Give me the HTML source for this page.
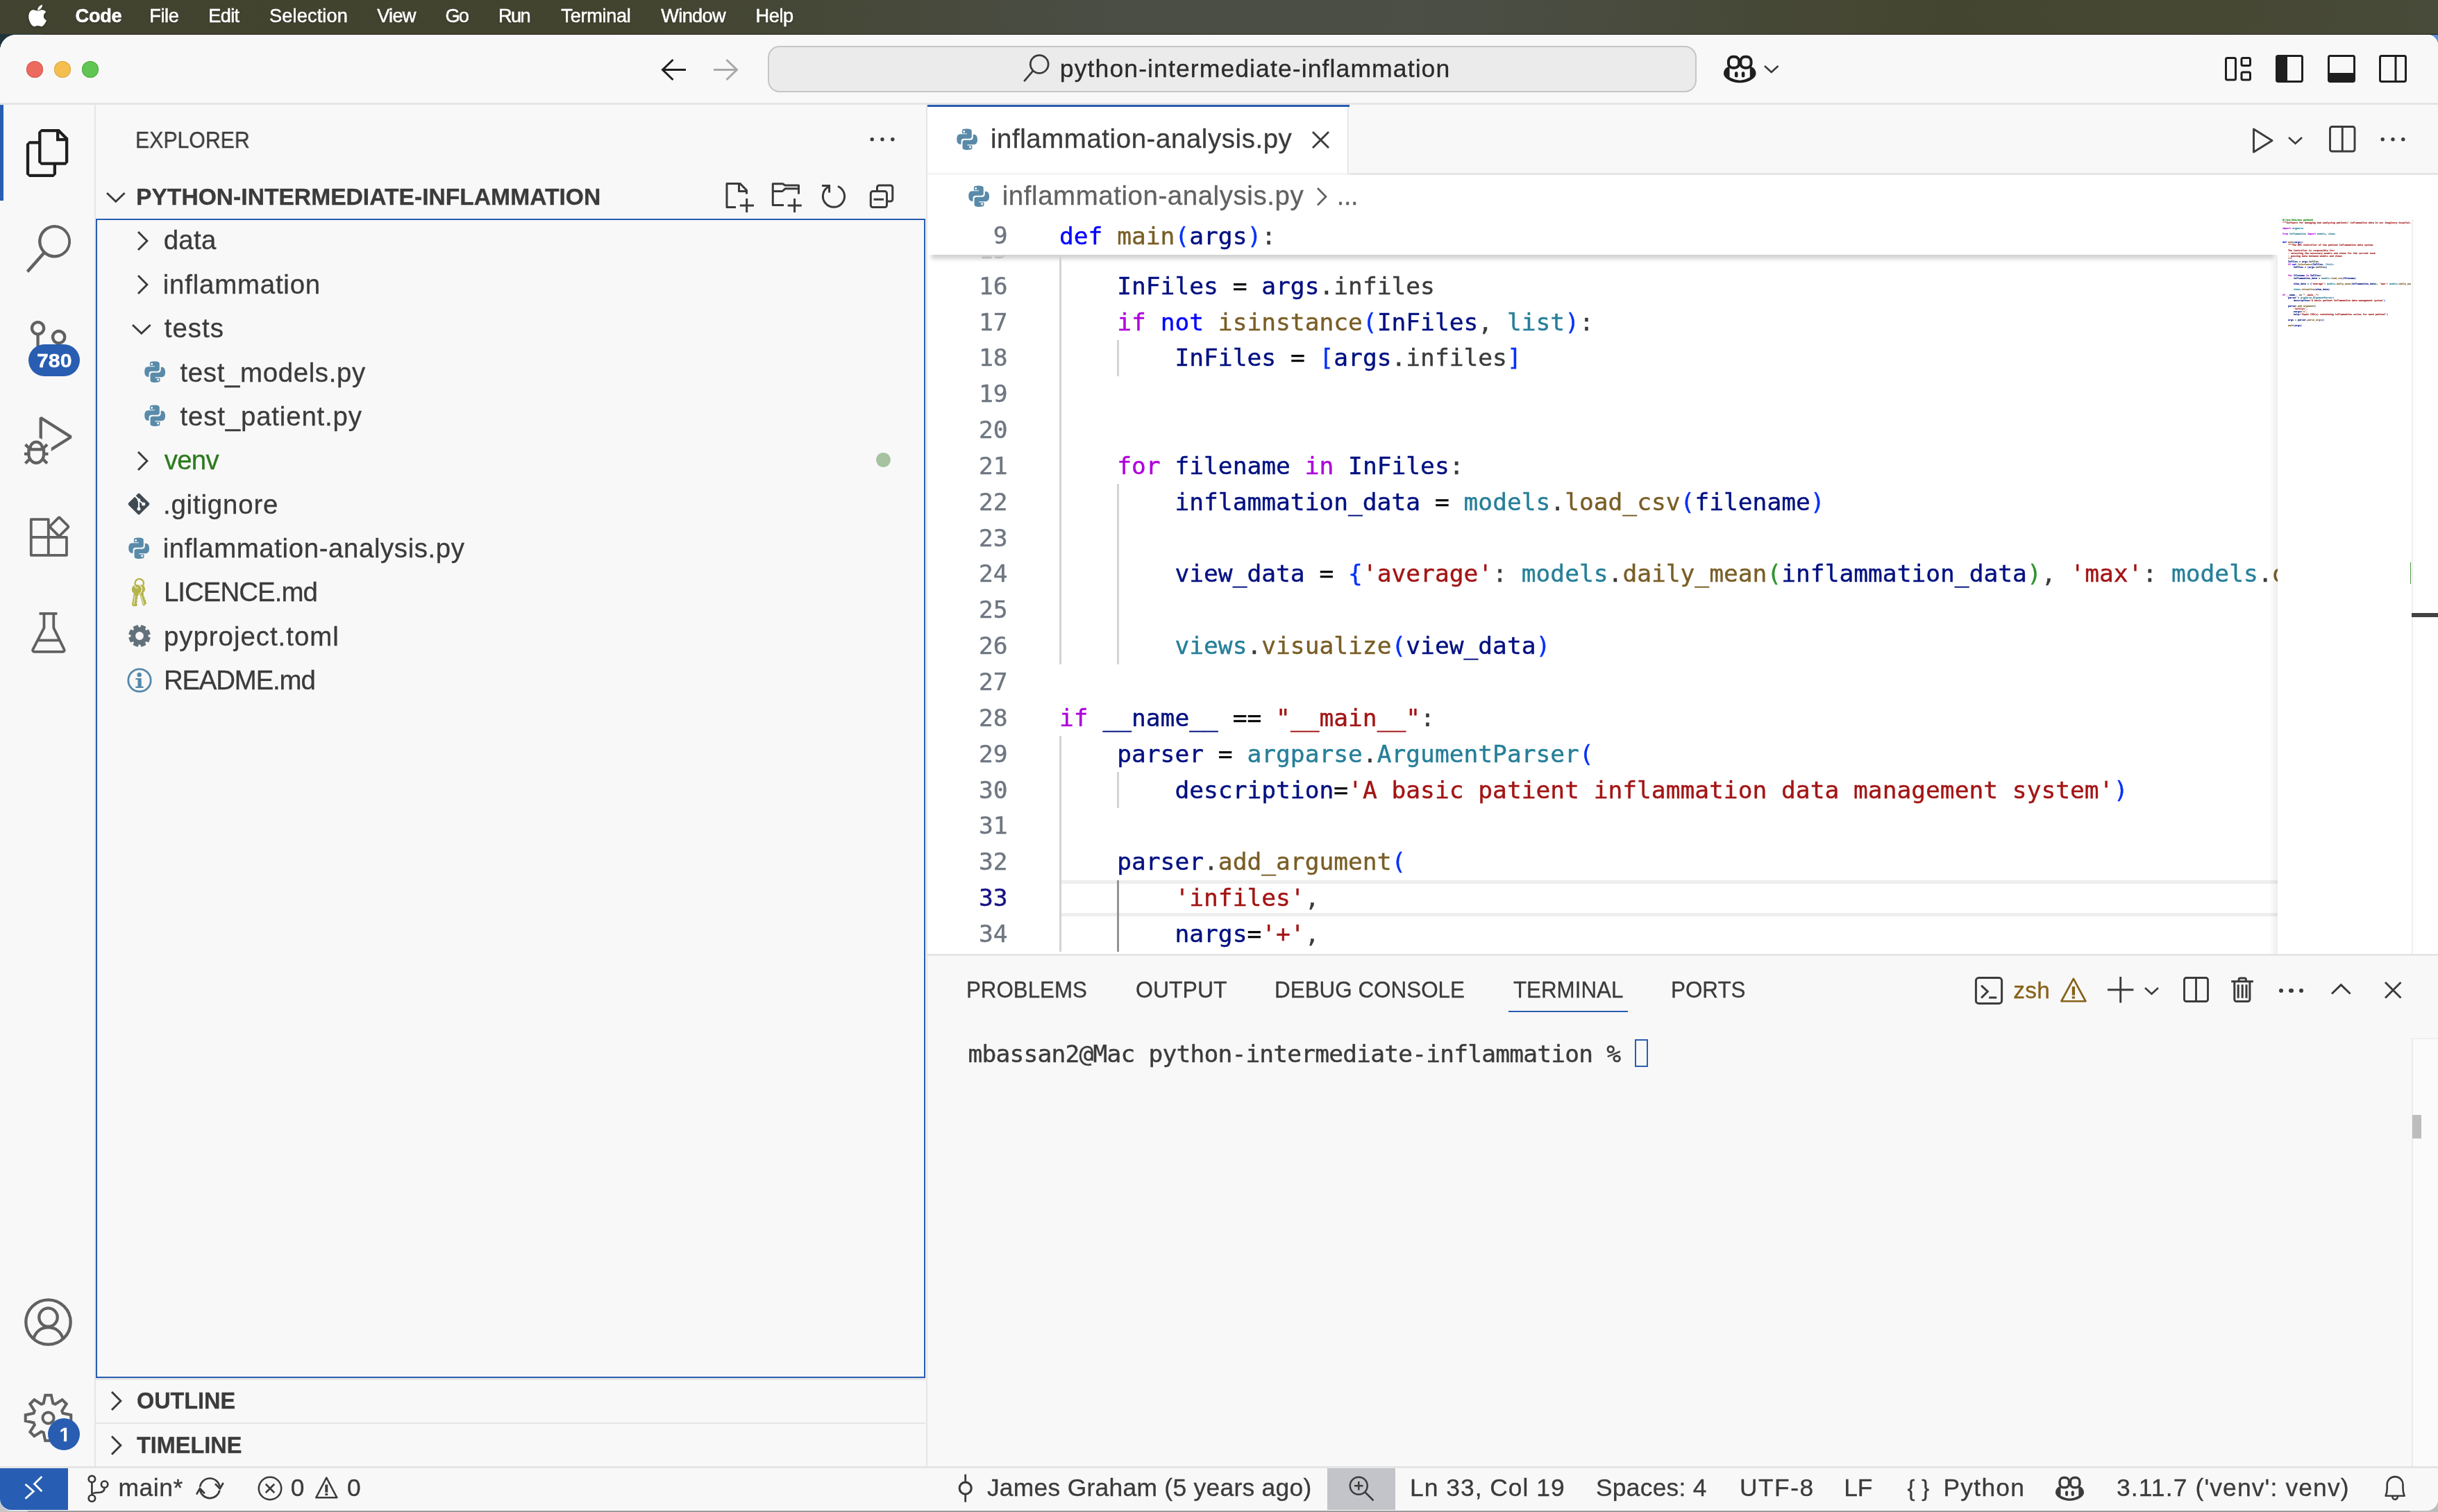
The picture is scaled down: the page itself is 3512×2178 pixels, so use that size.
<!DOCTYPE html>
<html lang="en"><head><meta charset="utf-8"><title>inflammation-analysis.py — python-intermediate-inflammation</title>
<style>
html,body{margin:0;padding:0;}
body{width:3512px;height:2178px;overflow:hidden;background:#2b2f2b;font-family:"Liberation Sans","Helvetica Neue",Arial,sans-serif;}
#root{will-change:transform;position:relative;width:3512px;height:2178px;overflow:hidden;}
#root div,#root svg,#root span.t{position:absolute;}
span.t{line-height:1;white-space:pre;}
svg{overflow:visible;}
.code span{white-space:pre;}
.m{font-family:"DejaVu Sans Mono","Liberation Mono",monospace;}
span.t{-webkit-text-stroke:0.32px currentColor;}
span.t.m{-webkit-text-stroke:0.42px currentColor;}

</style></head>
<body>
<div id="root">
<div style="left:0px;top:0px;width:3512px;height:48.5px;background:linear-gradient(90deg,#424330 0%,#43442f 25%,#4a4d43 45%,#4b4f46 58%,#44452f 80%,#484b39 100%);"></div>
<div style="left:0px;top:48.5px;width:3512px;height:6px;background:#1f1a14;"></div>
<div style="left:0px;top:48.5px;width:60px;height:40px;background:#20333c;"></div>
<div style="left:3492px;top:50px;width:20px;height:40px;background:#5a8fd8;"></div>
<div style="left:0px;top:2140px;width:3512px;height:38px;background:#9b9b9b;"></div>
<div style="left:0px;top:2150px;width:40px;height:28px;background:#c6c6c6;"></div>
<div style="left:3472px;top:2150px;width:40px;height:28px;background:#bdbdbd;"></div>
<span class="t" style="left:108.57px;top:8.58px;font-size:27.2px;color:#fff;font-weight:700;letter-spacing:-0.267px;text-shadow:0 1px 3px rgba(0,0,0,.35);-webkit-text-stroke:0.55px #fff;">Code</span>
<span class="t" style="left:215.37px;top:8.58px;font-size:27.2px;color:#fff;letter-spacing:-0.467px;text-shadow:0 1px 3px rgba(0,0,0,.35);-webkit-text-stroke:0.55px #fff;">File</span>
<span class="t" style="left:300.37px;top:8.58px;font-size:27.2px;color:#fff;letter-spacing:-0.700px;text-shadow:0 1px 3px rgba(0,0,0,.35);-webkit-text-stroke:0.55px #fff;">Edit</span>
<span class="t" style="left:387.97px;top:8.58px;font-size:27.2px;color:#fff;letter-spacing:0.139px;text-shadow:0 1px 3px rgba(0,0,0,.35);-webkit-text-stroke:0.55px #fff;">Selection</span>
<span class="t" style="left:543.17px;top:8.58px;font-size:27.2px;color:#fff;letter-spacing:-0.700px;text-shadow:0 1px 3px rgba(0,0,0,.35);-webkit-text-stroke:0.55px #fff;">View</span>
<span class="t" style="left:641.57px;top:8.58px;font-size:27.2px;color:#fff;letter-spacing:-1.900px;text-shadow:0 1px 3px rgba(0,0,0,.35);-webkit-text-stroke:0.55px #fff;">Go</span>
<span class="t" style="left:717.97px;top:8.58px;font-size:27.2px;color:#fff;letter-spacing:-1.550px;text-shadow:0 1px 3px rgba(0,0,0,.35);-webkit-text-stroke:0.55px #fff;">Run</span>
<span class="t" style="left:808.37px;top:8.58px;font-size:27.2px;color:#fff;letter-spacing:-0.314px;text-shadow:0 1px 3px rgba(0,0,0,.35);-webkit-text-stroke:0.55px #fff;">Terminal</span>
<span class="t" style="left:952.37px;top:8.58px;font-size:27.2px;color:#fff;letter-spacing:-0.700px;text-shadow:0 1px 3px rgba(0,0,0,.35);-webkit-text-stroke:0.55px #fff;">Window</span>
<span class="t" style="left:1088.57px;top:8.58px;font-size:27.2px;color:#fff;letter-spacing:-0.433px;text-shadow:0 1px 3px rgba(0,0,0,.35);-webkit-text-stroke:0.55px #fff;">Help</span>
<svg style="left:30px;top:0px;filter:drop-shadow(0 1px 2px rgba(0,0,0,.3));" width="50" height="48" viewBox="0 0 1575 1512"><path d="M770 490C700 500 640 445 560 450C440 455 355 580 355 760C355 900 440 1080 520 1160C570 1210 620 1215 680 1185C730 1160 810 1160 860 1185C920 1215 975 1210 1020 1160C1090 1090 1140 1000 1165 925C1080 890 1035 820 1035 740C1035 660 1075 590 1145 545C1100 480 1030 445 960 445C880 445 830 490 770 490Z" fill="#fff" /><path d="M760 470C745 380 840 240 975 215C990 330 890 460 760 470Z" fill="#fff" /></svg>
<div style="left:0px;top:50.2px;width:3512px;height:2124.8px;background:#f8f8f8;border-radius:23px 15px 16px 16px;box-shadow:0 1px 0 #fff, inset 0 1.5px 0 #fff;"></div>
<div style="left:0px;top:148.1px;width:3512px;height:2.9px;background:#e5e5e5;"></div>
<div style="left:38px;top:87.8px;width:24px;height:24px;background:#ed6a5e;border-radius:50%;box-shadow:inset 0 0 0 1px #d5594e;"></div>
<div style="left:78px;top:87.8px;width:24px;height:24px;background:#f5bf4f;border-radius:50%;box-shadow:inset 0 0 0 1px #dca53e;"></div>
<div style="left:118px;top:87.8px;width:24px;height:24px;background:#61c554;border-radius:50%;box-shadow:inset 0 0 0 1px #4fa942;"></div>
<div style="left:1106px;top:66px;width:1338px;height:66.5px;background:#ebebeb;border-radius:17px;box-shadow:inset 0 0 0 2px #c6c6c6;"></div>
<span class="t" style="left:1526.86px;top:81.66px;font-size:35.6px;color:#2b2b2b;letter-spacing:1.078px;">python-intermediate-inflammation</span>
<svg style="left:953.00px;top:84.81px;" width="35.00" height="30.98" viewBox="0 0 35 30.975"><path d="M35 15.4875H1.5M16.4875 1L1.5 15.4875L16.4875 29.975" fill="none" stroke="#1f1f1f" stroke-width="3" /></svg>
<svg style="left:1028.00px;top:84.81px;" width="35.00" height="30.98" viewBox="0 0 35 30.975"><path d="M0 15.4875H33.5M18.5125 1L33.5 15.4875L18.5125 29.975" fill="none" stroke="#a8a8a8" stroke-width="3" /></svg>
<svg style="left:1470.00px;top:74.00px;" width="46.00" height="48.00" viewBox="1470.00 74.00 46.00 48.00"><circle cx="1497.200" cy="92.500" r="12.900" fill="none" stroke="#3b3b3b" stroke-width="2.800"/><path d="M1488.200 101.800L1475.200 117.200" fill="none" stroke="#3b3b3b" stroke-width="2.8" /></svg>
<svg style="left:2482.50px;top:78.50px;" width="46.50" height="41.00" viewBox="0 0 47 40"><path d="M0 26.5C0 20 5 16.500 8 16.500L39 16.500C42 16.500 47 20 47 26.500C47 33.500 35 40 23.500 40C12 40 0 33.500 0 26.500z" fill="#1f1f1f" /><path d="M8.600 15L38.200 15L38.200 32C33 34.800 28 36.300 23.500 36.300C19 36.300 14 34.800 8.600 32z" fill="#f8f8f8" /><rect x="7" y="2" width="15.400" height="16.300" rx="6.500" fill="#f8f8f8" stroke="#1f1f1f" stroke-width="4"/><rect x="24.600" y="2" width="15.400" height="16.300" rx="6.500" fill="#f8f8f8" stroke="#1f1f1f" stroke-width="4"/><rect x="16.100" y="23.800" width="4.600" height="8.400" rx="2.300" fill="#1f1f1f"/><rect x="26.100" y="23.800" width="4.600" height="8.400" rx="2.300" fill="#1f1f1f"/></svg>
<svg style="left:2541.45px;top:93.69px;" width="21.50" height="11.61" viewBox="0 0 21.5 11.610000000000001"><path d="M1 1L10.75 10.010000000000002L20.5 1" fill="none" stroke="#3b3b3b" stroke-width="2.6" /></svg>
<svg style="left:3205.00px;top:81.50px;" width="38.50" height="34.50" viewBox="0 0 38.5 34.5"><rect x="1.5" y="1.5" width="14" height="31.5" rx="2" fill="none" stroke="#1f1f1f" stroke-width="3"/><rect x="24" y="1.5" width="12.5" height="11" rx="2" fill="none" stroke="#1f1f1f" stroke-width="3"/><rect x="24" y="22" width="12.5" height="11" rx="2" fill="none" stroke="#1f1f1f" stroke-width="3"/></svg>
<svg style="left:3278.00px;top:79.00px;" width="40.00" height="40.00" viewBox="0 0 40 40"><rect x="1.5" y="1.5" width="37" height="37" rx="2.2" fill="none" stroke="#1f1f1f" stroke-width="3"/><path d="M1.5 3h15.5v34h-15.500z" fill="#1f1f1f"/></svg>
<svg style="left:3352.60px;top:79.00px;" width="40.00" height="40.00" viewBox="0 0 40 40"><rect x="1.5" y="1.5" width="37" height="37" rx="2.2" fill="none" stroke="#1f1f1f" stroke-width="3"/><path d="M3 26h34v11.500h-34z" fill="#1f1f1f"/></svg>
<svg style="left:3427.40px;top:79.00px;" width="40.00" height="40.00" viewBox="0 0 40 40"><rect x="1.5" y="1.500" width="37" height="37" rx="2.2" fill="none" stroke="#1f1f1f" stroke-width="3"/><path d="M24 1.500v37" stroke="#1f1f1f" stroke-width="3"/></svg>
<div style="left:136.0px;top:151.0px;width:2.4px;height:1962.5px;background:#e5e5e5;"></div>
<div style="left:0px;top:151.0px;width:5.2px;height:138.2px;background:#285db1;"></div>
<svg style="left:34.50px;top:185.50px;" width="69.00" height="69.00" viewBox="0 0 24 24"><path d="M17.5 0h-9L7 1.5V6H2.5L1 7.5v15.07L2.5 24h12.07L16 22.57V18h4.7l1.3-1.430V4.500L17.500 0zm0 2.120l2.380 2.380H17.500V2.120zm-3 20.380h-12v-15H7v9.070L8.500 18h6v4.500zm6-6h-12v-15H16V6h4.500v10.500z" fill="#1f1f1f" /></svg>
<svg style="left:34.50px;top:323.74px;" width="69.00" height="69.00" viewBox="0 0 24 24"><path d="M15.25 0a8.25 8.25 0 0 0-6.18 13.72L1 22.880l1.120 1.120 8.050-9.120A8.251 8.251 0 1 0 15.250.010V0zm0 15a6.750 6.750 0 1 1 0-13.500 6.750 6.750 0 0 1 0 13.500z" fill="#616161" /></svg>
<svg style="left:34.50px;top:461.98px;" width="69.00" height="69.00" viewBox="0 0 24 24"><path d="M21.007 8.222A3.738 3.738 0 0 0 15.045 5.2a3.737 3.737 0 0 0 1.156 6.583 2.988 2.988 0 0 1-2.668 1.670h-2.990a4.456 4.456 0 0 0-2.989 1.165V7.400a3.737 3.737 0 1 0-1.494 0v9.117a3.776 3.776 0 1 0 1.816.099 2.990 2.990 0 0 1 2.668-1.667h2.990a4.484 4.484 0 0 0 4.223-3.039 3.736 3.736 0 0 0 3.250-3.687zM4.565 3.738a2.242 2.242 0 1 1 4.484 0 2.242 2.242 0 0 1-4.484 0zm4.484 16.441a2.242 2.242 0 1 1-4.484 0 2.242 2.242 0 0 1 4.484 0zm8.221-9.715a2.242 2.242 0 1 1 0-4.485 2.242 2.242 0 0 1 0 4.485z" fill="#616161" /></svg>
<svg style="left:34.50px;top:600.22px;" width="69.00" height="69.00" viewBox="0 0 24 24"><path d="M10.94 13.5l-1.32 1.32a3.73 3.73 0 0 0-7.24 0L1.06 13.5 0 14.560l1.720 1.720-.220.220V18H0v1.500h1.500v.080c.077.489.214.966.410 1.420L0 22.940 1.060 24l1.650-1.650A4.308 4.308 0 0 0 6 24a4.310 4.310 0 0 0 3.290-1.650L10.940 24 12 22.940 10.090 21c.198-.464.336-.951.410-1.450v-.100H12V18h-1.500v-1.500l-.220-.220L12 14.560l-1.060-1.060zM6 13.500a2.250 2.250 0 0 1 2.250 2.250h-4.500A2.250 2.250 0 0 1 6 13.500zm3 6a3.330 3.330 0 0 1-3 3 3.330 3.330 0 0 1-3-3v-2.250h6v2.250zm14.760-9.900v1.260L13.500 17.370V15.600l8.500-5.370L9 2v9.460a5.070 5.070 0 0 0-1.500-.720V.630L8.640 0l15.120 9.600z" fill="#616161" /></svg>
<svg style="left:34.50px;top:738.46px;" width="69.00" height="69.00" viewBox="0 0 24 24"><path d="M3.400 3.550H12.100V12.450H21.200V21.500H3.400zM3.400 12.450H12.100M12.100 12.450V21.500" fill="none" stroke="#616161" stroke-width="1.32" stroke-linejoin="round"/><rect x="14.06" y="3.80" width="6.800" height="6.800" rx="0.700" transform="rotate(45 17.46 7.2)" fill="none" stroke="#616161" stroke-width="1.32"/></svg>
<svg style="left:34.50px;top:876.70px;" width="69.00" height="69.00" viewBox="0 0 24 24"><path d="M7.500 2.400H16.500M9.900 2.400V9.500L4.300 20.400a.75.75 0 0 0 .7 1.100H19.300a.75.75 0 0 0 .700-1.100L14.700 9.500V2.400M6.700 15.750H17.600" fill="none" stroke="#616161" stroke-width="1.32" stroke-linejoin="round"/></svg>
<div style="left:40.7px;top:495.8px;width:74px;height:45.8px;background:#285db1;border-radius:23px;"></div>
<span class="t" style="left:53.14px;top:506.04px;font-size:27.6px;color:#fff;font-weight:700;transform:scaleX(1.0960);transform-origin:0 0;">780</span>
<svg style="left:34.50px;top:1869.70px;" width="69.00" height="69.00" viewBox="0 0 24 24"><circle cx="12" cy="12" r="11.200" fill="none" stroke="#616161" stroke-width="1.5"/><circle cx="12" cy="9.600" r="4.600" fill="none" stroke="#616161" stroke-width="1.5"/><path d="M4.600 20.200c1.200-3.600 4-5.600 7.400-5.600s6.200 2 7.400 5.600" fill="none" stroke="#616161" stroke-width="1.5" /></svg>
<svg style="left:34.50px;top:2008.00px;" width="69.00" height="69.00" viewBox="0 0 24 24"><path d="M9.62 4.68L10.51 0.60L13.49 0.60L14.38 4.68L15.50 5.14L19.01 2.89L21.11 4.99L18.86 8.50L19.32 9.62L23.40 10.51L23.40 13.49L19.32 14.38L18.86 15.50L21.11 19.01L19.01 21.11L15.50 18.86L14.38 19.32L13.49 23.40L10.51 23.40L9.62 19.32L8.50 18.86L4.99 21.11L2.89 19.01L5.14 15.50L4.68 14.38L0.60 13.49L0.60 10.51L4.68 9.62L5.14 8.50L2.89 4.99L4.99 2.89L8.50 5.14z" fill="none" stroke="#616161" stroke-width="1.4" stroke-linejoin="miter"/><circle cx="12" cy="12" r="2.800" fill="none" stroke="#616161" stroke-width="1.400"/></svg>
<div style="left:69.4px;top:2043px;width:45.8px;height:45.8px;background:#285db1;border-radius:50%;"></div>
<span class="t" style="left:85.75px;top:2053.02px;font-size:27.5px;color:#fff;font-weight:700;clip-path:polygon(0 0,100% 0,100% 72%,68% 72%,68% 100%,40% 100%,40% 72%,0 72%);">1</span>
<div style="left:1334.3px;top:151.0px;width:2.4px;height:1962.5px;background:#e5e5e5;"></div>
<span class="t" style="left:195.04px;top:186.10px;font-size:32.6px;color:#3b3b3b;transform:scaleX(0.9280);transform-origin:0 0;">EXPLORER</span>
<svg style="left:1253.00px;top:197.10px;" width="36.00" height="7.40" viewBox="0 0 36 7.3999999999999995"><circle cx="3.20" cy="3.6999999999999997" r="2.70" fill="#3b3b3b"/><circle cx="18.00" cy="3.6999999999999997" r="2.70" fill="#3b3b3b"/><circle cx="32.80" cy="3.6999999999999997" r="2.70" fill="#3b3b3b"/></svg>
<span class="t" style="left:195.84px;top:267.60px;font-size:32.6px;color:#3b3b3b;font-weight:700;transform:scaleX(1.0320);transform-origin:0 0;">PYTHON-INTERMEDIATE-INFLAMMATION</span>
<svg style="left:153.40px;top:277.05px;" width="27.60" height="14.90" viewBox="0 0 27.6 14.904000000000002"><path d="M1 1L13.8 13.304000000000002L26.6 1" fill="none" stroke="#3b3b3b" stroke-width="2.9" /></svg>
<svg style="left:1040.00px;top:258.00px;" width="50.00" height="52.00" viewBox="1040.00 258.00 50.00 52.00"><path d="M1060 298.500H1047V264.400H1066L1075.500 274V279.600M1064.500 264.400V275.500H1075.500M1075.700 286V306M1065.800 295.900H1086" fill="none" stroke="#3b3b3b" stroke-width="3" stroke-linejoin="round"/></svg>
<svg style="left:1108.00px;top:258.00px;" width="52.00" height="52.00" viewBox="1108.00 258.00 52.00 52.00"><path d="M1129 295.600H1113.300V264.700H1127.600L1131 267.100H1150.500V279.600M1113.300 275.500H1127L1131 271.800H1150.500M1144.600 286V306M1134.700 295.900H1154.800" fill="none" stroke="#3b3b3b" stroke-width="3" stroke-linejoin="round"/></svg>
<svg style="left:1180.00px;top:260.00px;" width="42.00" height="44.00" viewBox="1180.00 260.00 42.00 44.00"><path d="M1207 268.300A15.600 15.600 0 1 1 1193.500 269M1184 267.400H1194.600V277.500" fill="none" stroke="#3b3b3b" stroke-width="3" /></svg>
<svg style="left:1250.00px;top:262.00px;" width="40.00" height="40.00" viewBox="1250.00 262.00 40.00 40.00"><rect x="1254.300" y="275.600" width="23.200" height="22.900" rx="3" fill="none" stroke="#3b3b3b" stroke-width="3"/><path d="M1263.500 275V270a3 3 0 0 1 3-3h16.300a3 3 0 0 1 3 3v17a3 3 0 0 1-3 3H1278M1258.600 287.300H1273" fill="none" stroke="#3b3b3b" stroke-width="3" /></svg>
<div style="left:138.2px;top:315.2px;width:1194.8999999999999px;height:1669.3999999999999px;box-sizing:border-box;border:2.9px solid #285db1;"></div>
<span class="t" style="left:235.70px;top:327.49px;font-size:38.4px;color:#3b3b3b;letter-spacing:0.333px;">data</span>
<span class="t" style="left:234.70px;top:390.85px;font-size:38.4px;color:#3b3b3b;letter-spacing:0.808px;">inflammation</span>
<span class="t" style="left:236.70px;top:454.21px;font-size:38.4px;color:#3b3b3b;letter-spacing:1.025px;">tests</span>
<span class="t" style="left:259.50px;top:517.57px;font-size:38.4px;color:#3b3b3b;letter-spacing:0.654px;">test_models.py</span>
<span class="t" style="left:259.50px;top:580.93px;font-size:38.4px;color:#3b3b3b;letter-spacing:0.843px;">test_patient.py</span>
<span class="t" style="left:236.70px;top:644.29px;font-size:38.4px;color:#2d7a1f;letter-spacing:-0.700px;">venv</span>
<span class="t" style="left:234.90px;top:707.65px;font-size:38.4px;color:#3b3b3b;letter-spacing:0.844px;">.gitignore</span>
<span class="t" style="left:234.70px;top:771.01px;font-size:38.4px;color:#3b3b3b;letter-spacing:0.609px;">inflammation-analysis.py</span>
<span class="t" style="left:235.90px;top:834.37px;font-size:38.4px;color:#3b3b3b;letter-spacing:-0.934px;">LICENCE.md</span>
<span class="t" style="left:235.90px;top:897.73px;font-size:38.4px;color:#3b3b3b;letter-spacing:0.992px;">pyproject.toml</span>
<span class="t" style="left:235.90px;top:961.09px;font-size:38.4px;color:#3b3b3b;letter-spacing:-1.175px;">README.md</span>
<svg style="left:198.45px;top:332.80px;" width="15.50" height="28.00" viewBox="0 0 15.5 28"><path d="M1 1L13.9 14.0L1 27" fill="none" stroke="#3b3b3b" stroke-width="2.9" /></svg>
<svg style="left:198.45px;top:396.16px;" width="15.50" height="28.00" viewBox="0 0 15.5 28"><path d="M1 1L13.9 14.0L1 27" fill="none" stroke="#3b3b3b" stroke-width="2.9" /></svg>
<svg style="left:190.30px;top:466.97px;" width="27.60" height="14.90" viewBox="0 0 27.6 14.904000000000002"><path d="M1 1L13.8 13.304000000000002L26.6 1" fill="none" stroke="#3b3b3b" stroke-width="2.9" /></svg>
<svg style="left:198.45px;top:649.60px;" width="15.50" height="28.00" viewBox="0 0 15.5 28"><path d="M1 1L13.9 14.0L1 27" fill="none" stroke="#3b3b3b" stroke-width="2.9" /></svg>
<svg style="left:200.35px;top:509.69px;" width="50.00" height="50.00" viewBox="0 0 1512 1512"><path d="M480 520V400C480 340 560 320 690 320C820 320 900 350 900 420V650C900 720 860 750 790 750H560C480 750 440 800 440 870V990H400C300 990 250 900 250 770C250 640 300 555 400 555H690V520ZM565 395a45 45 0 1 0 0 90a45 45 0 1 0 0-90z" fill="#598aa9" fill-rule="evenodd"/><g transform="rotate(180 700 780)"><path d="M480 520V400C480 340 560 320 690 320C820 320 900 350 900 420V650C900 720 860 750 790 750H560C480 750 440 800 440 870V990H400C300 990 250 900 250 770C250 640 300 555 400 555H690V520ZM565 395a45 45 0 1 0 0 90a45 45 0 1 0 0-90z" fill="#598aa9" fill-rule="evenodd"/></g></svg>
<svg style="left:200.35px;top:573.05px;" width="50.00" height="50.00" viewBox="0 0 1512 1512"><path d="M480 520V400C480 340 560 320 690 320C820 320 900 350 900 420V650C900 720 860 750 790 750H560C480 750 440 800 440 870V990H400C300 990 250 900 250 770C250 640 300 555 400 555H690V520ZM565 395a45 45 0 1 0 0 90a45 45 0 1 0 0-90z" fill="#598aa9" fill-rule="evenodd"/><g transform="rotate(180 700 780)"><path d="M480 520V400C480 340 560 320 690 320C820 320 900 350 900 420V650C900 720 860 750 790 750H560C480 750 440 800 440 870V990H400C300 990 250 900 250 770C250 640 300 555 400 555H690V520ZM565 395a45 45 0 1 0 0 90a45 45 0 1 0 0-90z" fill="#598aa9" fill-rule="evenodd"/></g></svg>
<svg style="left:177.45px;top:764.03px;" width="50.00" height="50.00" viewBox="0 0 1512 1512"><path d="M480 520V400C480 340 560 320 690 320C820 320 900 350 900 420V650C900 720 860 750 790 750H560C480 750 440 800 440 870V990H400C300 990 250 900 250 770C250 640 300 555 400 555H690V520ZM565 395a45 45 0 1 0 0 90a45 45 0 1 0 0-90z" fill="#598aa9" fill-rule="evenodd"/><g transform="rotate(180 700 780)"><path d="M480 520V400C480 340 560 320 690 320C820 320 900 350 900 420V650C900 720 860 750 790 750H560C480 750 440 800 440 870V990H400C300 990 250 900 250 770C250 640 300 555 400 555H690V520ZM565 395a45 45 0 1 0 0 90a45 45 0 1 0 0-90z" fill="#598aa9" fill-rule="evenodd"/></g></svg>
<svg style="left:182.40px;top:708.00px;" width="36.00" height="36.00" viewBox="182.40 708.00 36.00 36.00"><rect x="188.90" y="714.50" width="23" height="23" rx="2.400" transform="rotate(45 200.4 726)" fill="#3f4a53"/><path d="M194.50 714.00L200.40 720.00V733.00M200.80 721.00L207.00 726" fill="none" stroke="#f8f8f8" stroke-width="2.1" /><circle cx="200.40" cy="733.00" r="2.500" fill="#f8f8f8"/><circle cx="207.10" cy="726.00" r="2.600" fill="#f8f8f8"/><circle cx="200.40" cy="720.30" r="2.200" fill="#f8f8f8"/></svg>
<svg style="left:184.40px;top:831.00px;" width="32.00" height="44.00" viewBox="184.40 831.00 32.00 44.00"><g transform="translate(0.00 0.00)"><circle cx="203.200" cy="848.500" r="6.300" fill="#b5b44c"/><path d="M201.300 855.500L206.300 872L208 872.700L211.900 868.600L210.200 867L210.700 864.600L208.700 863L209 860.600L207.200 859L207.400 855.500L205.500 852z" fill="#b5b44c" /><path d="M203.200 857L207.600 870.500" fill="none" stroke="#f8f8f8" stroke-width="0.9" /><circle cx="197.200" cy="849" r="7.600" fill="#b5b44c" stroke="#f8f8f8" stroke-width="1.100"/><path d="M193.300 854.500L190.300 871L192 873.200L197.300 873.200L198.400 870.300L197 868.400L198.600 866.200L197.300 864.200L199 862L198 860L200 857.200L201.200 853z" fill="#b5b44c" /><path d="M194.800 858L193.200 871" fill="none" stroke="#f8f8f8" stroke-width="0.9" /><path d="M205.500 844.500A6.200 6.200 0 1 0 196 843.600" fill="none" stroke="#b5b44c" stroke-width="2.4" /><path d="M194.200 842.800C194.500 846 197 847.800 199.300 846.600" fill="none" stroke="#f8f8f8" stroke-width="1.1" /></g></svg>
<svg style="left:182.60px;top:897.80px;" width="36.00" height="36.00" viewBox="182.60 897.80 36.00 36.00"><path d="M202.16 904.20L203.57 900.89L209.04 903.16L207.70 906.50L209.90 908.70L213.24 907.36L215.51 912.83L212.20 914.24L212.20 917.36L215.51 918.77L213.24 924.24L209.90 922.90L207.70 925.10L209.04 928.44L203.57 930.71L202.16 927.40L199.04 927.40L197.63 930.71L192.16 928.44L193.50 925.10L191.30 922.90L187.96 924.24L185.69 918.77L189.00 917.36L189.00 914.24L185.69 912.83L187.96 907.36L191.30 908.70L193.50 906.50L192.16 903.16L197.63 900.89L199.04 904.20zM200.6 909.0999999999999a6.700 6.700 0 1 0 0 13.400 6.700 6.700 0 0 0 0-13.400z" fill="#63717b" stroke="#63717b" stroke-width="1.6" fill-rule="evenodd" stroke-linejoin="round"/></svg>
<svg style="left:181.60px;top:961.00px;" width="38.00" height="38.00" viewBox="181.60 961.00 38.00 38.00"><circle cx="200.6" cy="980" r="16.200" fill="none" stroke="#5488a9" stroke-width="2.800"/><circle cx="200.30" cy="972.00" r="3.200" fill="#5488a9"/><path d="M194.90 977.00H203.30V988.80H206.20V991.00H194.90V988.80H198.10V979.00H194.90z" fill="#5488a9" /></svg>
<div style="left:1262.4px;top:652.4px;width:20.8px;height:20.8px;background:#a6c2a0;border-radius:50%;"></div>
<div style="left:138.2px;top:1985.3999999999999px;width:1194.8999999999999px;height:2.6px;background:#e5e5e5;"></div>
<span class="t" style="left:197.04px;top:2001.60px;font-size:32.6px;color:#3b3b3b;font-weight:700;transform:scaleX(0.9930);transform-origin:0 0;">OUTLINE</span>
<svg style="left:160.25px;top:2004.00px;" width="15.50" height="28.00" viewBox="0 0 15.5 28"><path d="M1 1L13.9 14.0L1 27" fill="none" stroke="#3b3b3b" stroke-width="2.9" /></svg>
<div style="left:138.2px;top:2048.6px;width:1194.8999999999999px;height:2.6px;background:#e5e5e5;"></div>
<span class="t" style="left:197.04px;top:2065.60px;font-size:32.6px;color:#3b3b3b;font-weight:700;transform:scaleX(0.9960);transform-origin:0 0;">TIMELINE</span>
<svg style="left:160.25px;top:2067.70px;" width="15.50" height="28.00" viewBox="0 0 15.5 28"><path d="M1 1L13.9 14.0L1 27" fill="none" stroke="#3b3b3b" stroke-width="2.9" /></svg>
<div style="left:1335.5px;top:151.0px;width:2176.5px;height:100.80000000000001px;background:#f8f8f8;"></div>
<div style="left:1335.5px;top:248.9px;width:2176.5px;height:2.9px;background:#e5e5e5;"></div>
<div style="left:1335.5px;top:151.0px;width:608.0px;height:100.80000000000001px;background:#fff;"></div>
<div style="left:1940.7px;top:151.0px;width:2.8px;height:100.80000000000001px;background:#e5e5e5;"></div>
<div style="left:1335.5px;top:151.0px;width:608.0px;height:3.4px;background:#285db1;"></div>
<div style="left:1335.5px;top:248.9px;width:605.2px;height:2.9px;background:#f4f4f4;"></div>
<svg style="left:1369.85px;top:175.01px;" width="50.00" height="50.00" viewBox="0 0 1512 1512"><path d="M480 520V400C480 340 560 320 690 320C820 320 900 350 900 420V650C900 720 860 750 790 750H560C480 750 440 800 440 870V990H400C300 990 250 900 250 770C250 640 300 555 400 555H690V520ZM565 395a45 45 0 1 0 0 90a45 45 0 1 0 0-90z" fill="#598aa9" fill-rule="evenodd"/><g transform="rotate(180 700 780)"><path d="M480 520V400C480 340 560 320 690 320C820 320 900 350 900 420V650C900 720 860 750 790 750H560C480 750 440 800 440 870V990H400C300 990 250 900 250 770C250 640 300 555 400 555H690V520ZM565 395a45 45 0 1 0 0 90a45 45 0 1 0 0-90z" fill="#598aa9" fill-rule="evenodd"/></g></svg>
<span class="t" style="left:1426.90px;top:181.19px;font-size:38.4px;color:#3b3b3b;letter-spacing:0.591px;">inflammation-analysis.py</span>
<svg style="left:1890.30px;top:188.50px;" width="25.00" height="25.00" viewBox="0 0 25 25"><path d="M1 1L24 24M24 1L1 24" fill="none" stroke="#3b3b3b" stroke-width="2.9" /></svg>
<svg style="left:3245.00px;top:183.50px;" width="30.00" height="37.00" viewBox="0 0 30 37"><path d="M1.500 2L28 18.5L1.500 35z" fill="none" stroke="#3b3b3b" stroke-width="2.9" stroke-linejoin="round"/></svg>
<svg style="left:3295.80px;top:196.83px;" width="21.00" height="11.34" viewBox="0 0 21 11.34"><path d="M1 1L10.5 9.74L20 1" fill="none" stroke="#3b3b3b" stroke-width="2.6" /></svg>
<svg style="left:3355.05px;top:181.35px;" width="38.50" height="38.50" viewBox="0 0 38.5 38.5"><rect x="1.500" y="1.500" width="35.5" height="35.5" rx="3" fill="none" stroke="#3b3b3b" stroke-width="2.900"/><path d="M19.25 1.500v35.5" fill="none" stroke="#3b3b3b" stroke-width="2.9" /></svg>
<svg style="left:3429.20px;top:197.10px;" width="36.00" height="7.40" viewBox="0 0 36 7.3999999999999995"><circle cx="3.20" cy="3.6999999999999997" r="2.70" fill="#3b3b3b"/><circle cx="18.00" cy="3.6999999999999997" r="2.70" fill="#3b3b3b"/><circle cx="32.80" cy="3.6999999999999997" r="2.70" fill="#3b3b3b"/></svg>
<div style="left:1335.5px;top:251.8px;width:2176.5px;height:1123.7px;background:#fff;"></div>
<div style="left:1528.0px;top:1267.88px;width:1753.0px;height:51.84px;box-sizing:border-box;border-top:5.4px solid #eeeeee;border-bottom:5.4px solid #eeeeee;"></div>
<div style="left:1335.5px;top:315.2px;width:1945.5px;height:1060.3px;overflow:hidden;"><div style="left:-1335.5px;top:-315.2px;width:3512px;height:2178px;">
<span class="t m" style="left:1609.22px;top:394.76px;font-size:34.56px;color:#001080">InFiles</span>
<span class="t m" style="left:1775.66px;top:394.76px;font-size:34.56px;color:#000000">=</span>
<span class="t m" style="left:1817.27px;top:394.76px;font-size:34.56px;color:#001080">args</span>
<span class="t m" style="left:1900.49px;top:394.76px;font-size:34.56px;color:#3b3b3b">.</span>
<span class="t m" style="left:1921.30px;top:394.76px;font-size:34.56px;color:#3b3b3b">infiles</span>
<span class="t m" style="left:1609.22px;top:446.60px;font-size:34.56px;color:#af00db">if</span>
<span class="t m" style="left:1671.63px;top:446.60px;font-size:34.56px;color:#0000ff">not</span>
<span class="t m" style="left:1754.86px;top:446.60px;font-size:34.56px;color:#795e26">isinstance</span>
<span class="t m" style="left:1962.90px;top:446.60px;font-size:34.56px;color:#0431fa">(</span>
<span class="t m" style="left:1983.71px;top:446.60px;font-size:34.56px;color:#001080">InFiles</span>
<span class="t m" style="left:2129.35px;top:446.60px;font-size:34.56px;color:#3b3b3b">,</span>
<span class="t m" style="left:2170.95px;top:446.60px;font-size:34.56px;color:#267f99">list</span>
<span class="t m" style="left:2254.18px;top:446.60px;font-size:34.56px;color:#0431fa">)</span>
<span class="t m" style="left:2274.98px;top:446.60px;font-size:34.56px;color:#3b3b3b">:</span>
<span class="t m" style="left:1692.44px;top:498.44px;font-size:34.56px;color:#001080">InFiles</span>
<span class="t m" style="left:1858.88px;top:498.44px;font-size:34.56px;color:#000000">=</span>
<span class="t m" style="left:1900.49px;top:498.44px;font-size:34.56px;color:#0431fa">[</span>
<span class="t m" style="left:1921.30px;top:498.44px;font-size:34.56px;color:#001080">args</span>
<span class="t m" style="left:2004.51px;top:498.44px;font-size:34.56px;color:#3b3b3b">.</span>
<span class="t m" style="left:2025.32px;top:498.44px;font-size:34.56px;color:#3b3b3b">infiles</span>
<span class="t m" style="left:2170.95px;top:498.44px;font-size:34.56px;color:#0431fa">]</span>
<span class="t m" style="left:1609.22px;top:653.96px;font-size:34.56px;color:#af00db">for</span>
<span class="t m" style="left:1692.44px;top:653.96px;font-size:34.56px;color:#001080">filename</span>
<span class="t m" style="left:1879.68px;top:653.96px;font-size:34.56px;color:#af00db">in</span>
<span class="t m" style="left:1942.10px;top:653.96px;font-size:34.56px;color:#001080">InFiles</span>
<span class="t m" style="left:2087.74px;top:653.96px;font-size:34.56px;color:#3b3b3b">:</span>
<span class="t m" style="left:1692.44px;top:705.80px;font-size:34.56px;color:#001080">inflammation_data</span>
<span class="t m" style="left:2066.93px;top:705.80px;font-size:34.56px;color:#000000">=</span>
<span class="t m" style="left:2108.54px;top:705.80px;font-size:34.56px;color:#267f99">models</span>
<span class="t m" style="left:2233.37px;top:705.80px;font-size:34.56px;color:#3b3b3b">.</span>
<span class="t m" style="left:2254.18px;top:705.80px;font-size:34.56px;color:#795e26">load_csv</span>
<span class="t m" style="left:2420.61px;top:705.80px;font-size:34.56px;color:#0431fa">(</span>
<span class="t m" style="left:2441.42px;top:705.80px;font-size:34.56px;color:#001080">filename</span>
<span class="t m" style="left:2607.86px;top:705.80px;font-size:34.56px;color:#0431fa">)</span>
<span class="t m" style="left:1692.44px;top:809.48px;font-size:34.56px;color:#001080">view_data</span>
<span class="t m" style="left:1900.49px;top:809.48px;font-size:34.56px;color:#000000">=</span>
<span class="t m" style="left:1942.10px;top:809.48px;font-size:34.56px;color:#0431fa">{</span>
<span class="t m" style="left:1962.90px;top:809.48px;font-size:34.56px;color:#a31515">&#x27;average&#x27;</span>
<span class="t m" style="left:2150.15px;top:809.48px;font-size:34.56px;color:#3b3b3b">:</span>
<span class="t m" style="left:2191.76px;top:809.48px;font-size:34.56px;color:#267f99">models</span>
<span class="t m" style="left:2316.59px;top:809.48px;font-size:34.56px;color:#3b3b3b">.</span>
<span class="t m" style="left:2337.39px;top:809.48px;font-size:34.56px;color:#795e26">daily_mean</span>
<span class="t m" style="left:2545.44px;top:809.48px;font-size:34.56px;color:#319331">(</span>
<span class="t m" style="left:2566.25px;top:809.48px;font-size:34.56px;color:#001080">inflammation_data</span>
<span class="t m" style="left:2919.93px;top:809.48px;font-size:34.56px;color:#319331">)</span>
<span class="t m" style="left:2940.74px;top:809.48px;font-size:34.56px;color:#3b3b3b">,</span>
<span class="t m" style="left:2982.35px;top:809.48px;font-size:34.56px;color:#a31515">&#x27;max&#x27;</span>
<span class="t m" style="left:3086.38px;top:809.48px;font-size:34.56px;color:#3b3b3b">:</span>
<span class="t m" style="left:3127.98px;top:809.48px;font-size:34.56px;color:#267f99">models</span>
<span class="t m" style="left:3252.82px;top:809.48px;font-size:34.56px;color:#3b3b3b">.</span>
<span class="t m" style="left:3273.62px;top:809.48px;font-size:34.56px;color:#795e26">daily_max</span>
<span class="t m" style="left:3460.86px;top:809.48px;font-size:34.56px;color:#319331">(</span>
<span class="t m" style="left:3481.67px;top:809.48px;font-size:34.56px;color:#001080">inflammation_data</span>
<span class="t m" style="left:3835.36px;top:809.48px;font-size:34.56px;color:#319331">)</span>
<span class="t m" style="left:1692.44px;top:913.16px;font-size:34.56px;color:#267f99">views</span>
<span class="t m" style="left:1796.46px;top:913.16px;font-size:34.56px;color:#3b3b3b">.</span>
<span class="t m" style="left:1817.27px;top:913.16px;font-size:34.56px;color:#795e26">visualize</span>
<span class="t m" style="left:2004.51px;top:913.16px;font-size:34.56px;color:#0431fa">(</span>
<span class="t m" style="left:2025.32px;top:913.16px;font-size:34.56px;color:#001080">view_data</span>
<span class="t m" style="left:2212.57px;top:913.16px;font-size:34.56px;color:#0431fa">)</span>
<span class="t m" style="left:1526.00px;top:1016.84px;font-size:34.56px;color:#af00db">if</span>
<span class="t m" style="left:1588.41px;top:1016.84px;font-size:34.56px;color:#001080">__name__</span>
<span class="t m" style="left:1775.66px;top:1016.84px;font-size:34.56px;color:#000000">==</span>
<span class="t m" style="left:1838.08px;top:1016.84px;font-size:34.56px;color:#a31515">&quot;__main__&quot;</span>
<span class="t m" style="left:2046.12px;top:1016.84px;font-size:34.56px;color:#3b3b3b">:</span>
<span class="t m" style="left:1609.22px;top:1068.68px;font-size:34.56px;color:#001080">parser</span>
<span class="t m" style="left:1754.86px;top:1068.68px;font-size:34.56px;color:#000000">=</span>
<span class="t m" style="left:1796.46px;top:1068.68px;font-size:34.56px;color:#267f99">argparse</span>
<span class="t m" style="left:1962.90px;top:1068.68px;font-size:34.56px;color:#3b3b3b">.</span>
<span class="t m" style="left:1983.71px;top:1068.68px;font-size:34.56px;color:#267f99">ArgumentParser</span>
<span class="t m" style="left:2274.98px;top:1068.68px;font-size:34.56px;color:#0431fa">(</span>
<span class="t m" style="left:1692.44px;top:1120.52px;font-size:34.56px;color:#001080">description</span>
<span class="t m" style="left:1921.30px;top:1120.52px;font-size:34.56px;color:#000000">=</span>
<span class="t m" style="left:1942.10px;top:1120.52px;font-size:34.56px;color:#a31515">&#x27;A basic patient inflammation data management system&#x27;</span>
<span class="t m" style="left:3044.76px;top:1120.52px;font-size:34.56px;color:#0431fa">)</span>
<span class="t m" style="left:1609.22px;top:1224.20px;font-size:34.56px;color:#001080">parser</span>
<span class="t m" style="left:1734.05px;top:1224.20px;font-size:34.56px;color:#3b3b3b">.</span>
<span class="t m" style="left:1754.86px;top:1224.20px;font-size:34.56px;color:#795e26">add_argument</span>
<span class="t m" style="left:2004.51px;top:1224.20px;font-size:34.56px;color:#0431fa">(</span>
<span class="t m" style="left:1692.44px;top:1276.04px;font-size:34.56px;color:#a31515">&#x27;infiles&#x27;</span>
<span class="t m" style="left:1879.68px;top:1276.04px;font-size:34.56px;color:#3b3b3b">,</span>
<span class="t m" style="left:1692.44px;top:1327.88px;font-size:34.56px;color:#001080">nargs</span>
<span class="t m" style="left:1796.46px;top:1327.88px;font-size:34.56px;color:#000000">=</span>
<span class="t m" style="left:1817.27px;top:1327.88px;font-size:34.56px;color:#a31515">&#x27;+&#x27;</span>
<span class="t m" style="left:1879.68px;top:1327.88px;font-size:34.56px;color:#3b3b3b">,</span>
<span class="t m" style="left:1409.89px;top:342.92px;font-size:34.56px;color:#6e7681">15</span>
<span class="t m" style="left:1409.89px;top:394.76px;font-size:34.56px;color:#6e7681">16</span>
<span class="t m" style="left:1409.89px;top:446.60px;font-size:34.56px;color:#6e7681">17</span>
<span class="t m" style="left:1409.89px;top:498.44px;font-size:34.56px;color:#6e7681">18</span>
<span class="t m" style="left:1409.89px;top:550.28px;font-size:34.56px;color:#6e7681">19</span>
<span class="t m" style="left:1409.89px;top:602.12px;font-size:34.56px;color:#6e7681">20</span>
<span class="t m" style="left:1409.89px;top:653.96px;font-size:34.56px;color:#6e7681">21</span>
<span class="t m" style="left:1409.89px;top:705.80px;font-size:34.56px;color:#6e7681">22</span>
<span class="t m" style="left:1409.89px;top:757.64px;font-size:34.56px;color:#6e7681">23</span>
<span class="t m" style="left:1409.89px;top:809.48px;font-size:34.56px;color:#6e7681">24</span>
<span class="t m" style="left:1409.89px;top:861.32px;font-size:34.56px;color:#6e7681">25</span>
<span class="t m" style="left:1409.89px;top:913.16px;font-size:34.56px;color:#6e7681">26</span>
<span class="t m" style="left:1409.89px;top:965.00px;font-size:34.56px;color:#6e7681">27</span>
<span class="t m" style="left:1409.89px;top:1016.84px;font-size:34.56px;color:#6e7681">28</span>
<span class="t m" style="left:1409.89px;top:1068.68px;font-size:34.56px;color:#6e7681">29</span>
<span class="t m" style="left:1409.89px;top:1120.52px;font-size:34.56px;color:#6e7681">30</span>
<span class="t m" style="left:1409.89px;top:1172.36px;font-size:34.56px;color:#6e7681">31</span>
<span class="t m" style="left:1409.89px;top:1224.20px;font-size:34.56px;color:#6e7681">32</span>
<span class="t m" style="left:1409.89px;top:1276.04px;font-size:34.56px;color:#171184">33</span>
<span class="t m" style="left:1409.89px;top:1327.88px;font-size:34.56px;color:#6e7681">34</span>
<div style="left:1526.0px;top:334.55999999999995px;width:2.6px;height:622.08px;background:#d3d3d3;"></div>
<div style="left:1609.22px;top:490.08000000000004px;width:2.6px;height:51.84px;background:#d3d3d3;"></div>
<div style="left:1609.22px;top:697.4399999999999px;width:2.6px;height:259.20000000000005px;background:#d3d3d3;"></div>
<div style="left:1526.0px;top:1060.3200000000002px;width:2.6px;height:311.04px;background:#d3d3d3;"></div>
<div style="left:1609.22px;top:1112.16px;width:2.6px;height:51.84px;background:#d3d3d3;"></div>
<div style="left:1609.22px;top:1267.6800000000003px;width:2.6px;height:103.68px;background:#939393;"></div>
</div></div>
<div style="left:1335.5px;top:315.2px;width:1945.5px;height:52.2px;background:#fff;box-shadow:0 11.5px 5.8px -5.8px #d2d2d2;"></div>
<span class="t m" style="left:1526.00px;top:322.56px;font-size:34.56px;color:#0000ff">def</span>
<span class="t m" style="left:1609.22px;top:322.56px;font-size:34.56px;color:#795e26">main</span>
<span class="t m" style="left:1692.44px;top:322.56px;font-size:34.56px;color:#0431fa">(</span>
<span class="t m" style="left:1713.24px;top:322.56px;font-size:34.56px;color:#001080">args</span>
<span class="t m" style="left:1796.46px;top:322.56px;font-size:34.56px;color:#0431fa">)</span>
<span class="t m" style="left:1817.27px;top:322.56px;font-size:34.56px;color:#3b3b3b">:</span>
<span class="t m" style="left:1430.69px;top:322.06px;font-size:34.56px;color:#6e7681">9</span>
<div style="left:1335.5px;top:251.8px;width:2176.5px;height:63.39999999999998px;background:#fff;"></div>
<svg style="left:1387.35px;top:257.01px;" width="50.00" height="50.00" viewBox="0 0 1512 1512"><path d="M480 520V400C480 340 560 320 690 320C820 320 900 350 900 420V650C900 720 860 750 790 750H560C480 750 440 800 440 870V990H400C300 990 250 900 250 770C250 640 300 555 400 555H690V520ZM565 395a45 45 0 1 0 0 90a45 45 0 1 0 0-90z" fill="#598aa9" fill-rule="evenodd"/><g transform="rotate(180 700 780)"><path d="M480 520V400C480 340 560 320 690 320C820 320 900 350 900 420V650C900 720 860 750 790 750H560C480 750 440 800 440 870V990H400C300 990 250 900 250 770C250 640 300 555 400 555H690V520ZM565 395a45 45 0 1 0 0 90a45 45 0 1 0 0-90z" fill="#598aa9" fill-rule="evenodd"/></g></svg>
<span class="t" style="left:1443.70px;top:263.29px;font-size:38.4px;color:#616161;letter-spacing:0.591px;">inflammation-analysis.py</span>
<svg style="left:1896.90px;top:269.95px;" width="14.60" height="26.50" viewBox="0 0 14.6 26.5"><path d="M1 1L13.0 13.25L1 25.5" fill="none" stroke="#616161" stroke-width="2.7" /></svg>
<span class="t" style="left:1925.74px;top:263.97px;font-size:37.6px;color:#616161;letter-spacing:-0.250px;">...</span>
<div style="left:3269px;top:367.4px;width:12px;height:1008.0999999999999px;background:linear-gradient(90deg,rgba(0,0,0,0),rgba(0,0,0,.07));"></div>
<div style="left:3281px;top:315.2px;width:192.5px;height:1060.3px;background:#fff;"></div>
<div style="left:3288px;top:315.2px;width:185px;height:400px;overflow:hidden;font-size:3.322px;line-height:4px;font-weight:700;-webkit-text-stroke:0.15px currentColor;">
<span class="t m" style="-webkit-text-stroke:0.15px currentColor;left:0.0px;top:0.2px;line-height:4px;color:#008000">#!/usr/bin/env python3</span>
<span class="t m" style="-webkit-text-stroke:0.15px currentColor;left:0.0px;top:4.2px;line-height:4px;color:#a31515">&quot;&quot;&quot;Software for managing and analysing patients&#x27; inflammation data in our imaginary hospital.&quot;&quot;&quot;</span>
<span class="t m" style="-webkit-text-stroke:0.15px currentColor;left:0.0px;top:12.2px;line-height:4px;color:#af00db">import</span>
<span class="t m" style="-webkit-text-stroke:0.15px currentColor;left:14.0px;top:12.2px;line-height:4px;color:#267f99">argparse</span>
<span class="t m" style="-webkit-text-stroke:0.15px currentColor;left:0.0px;top:20.2px;line-height:4px;color:#af00db">from</span>
<span class="t m" style="-webkit-text-stroke:0.15px currentColor;left:10.0px;top:20.2px;line-height:4px;color:#267f99">inflammation</span>
<span class="t m" style="-webkit-text-stroke:0.15px currentColor;left:36.0px;top:20.2px;line-height:4px;color:#af00db">import</span>
<span class="t m" style="-webkit-text-stroke:0.15px currentColor;left:50.0px;top:20.2px;line-height:4px;color:#267f99">models</span>
<span class="t m" style="-webkit-text-stroke:0.15px currentColor;left:62.0px;top:20.2px;line-height:4px;color:#3b3b3b">,</span>
<span class="t m" style="-webkit-text-stroke:0.15px currentColor;left:66.0px;top:20.2px;line-height:4px;color:#267f99">views</span>
<span class="t m" style="-webkit-text-stroke:0.15px currentColor;left:0.0px;top:32.2px;line-height:4px;color:#0000ff">def</span>
<span class="t m" style="-webkit-text-stroke:0.15px currentColor;left:8.0px;top:32.2px;line-height:4px;color:#795e26">main</span>
<span class="t m" style="-webkit-text-stroke:0.15px currentColor;left:16.0px;top:32.2px;line-height:4px;color:#0431fa">(</span>
<span class="t m" style="-webkit-text-stroke:0.15px currentColor;left:18.0px;top:32.2px;line-height:4px;color:#001080">args</span>
<span class="t m" style="-webkit-text-stroke:0.15px currentColor;left:26.0px;top:32.2px;line-height:4px;color:#0431fa">)</span>
<span class="t m" style="-webkit-text-stroke:0.15px currentColor;left:28.0px;top:32.2px;line-height:4px;color:#3b3b3b">:</span>
<span class="t m" style="-webkit-text-stroke:0.15px currentColor;left:8.0px;top:36.2px;line-height:4px;color:#a31515">&quot;&quot;&quot;The MVC Controller of the patient inflammation data system.</span>
<span class="t m" style="-webkit-text-stroke:0.15px currentColor;left:8.0px;top:44.2px;line-height:4px;color:#a31515">The Controller is responsible for:</span>
<span class="t m" style="-webkit-text-stroke:0.15px currentColor;left:8.0px;top:48.2px;line-height:4px;color:#a31515">- selecting the necessary models and views for the current task</span>
<span class="t m" style="-webkit-text-stroke:0.15px currentColor;left:8.0px;top:52.2px;line-height:4px;color:#a31515">- passing data between models and views</span>
<span class="t m" style="-webkit-text-stroke:0.15px currentColor;left:8.0px;top:56.2px;line-height:4px;color:#a31515">&quot;&quot;&quot;</span>
<span class="t m" style="-webkit-text-stroke:0.15px currentColor;left:8.0px;top:60.2px;line-height:4px;color:#001080">InFiles</span>
<span class="t m" style="-webkit-text-stroke:0.15px currentColor;left:24.0px;top:60.2px;line-height:4px;color:#000000">=</span>
<span class="t m" style="-webkit-text-stroke:0.15px currentColor;left:28.0px;top:60.2px;line-height:4px;color:#001080">args</span>
<span class="t m" style="-webkit-text-stroke:0.15px currentColor;left:36.0px;top:60.2px;line-height:4px;color:#3b3b3b">.</span>
<span class="t m" style="-webkit-text-stroke:0.15px currentColor;left:38.0px;top:60.2px;line-height:4px;color:#3b3b3b">infiles</span>
<span class="t m" style="-webkit-text-stroke:0.15px currentColor;left:8.0px;top:64.2px;line-height:4px;color:#af00db">if</span>
<span class="t m" style="-webkit-text-stroke:0.15px currentColor;left:14.0px;top:64.2px;line-height:4px;color:#0000ff">not</span>
<span class="t m" style="-webkit-text-stroke:0.15px currentColor;left:22.0px;top:64.2px;line-height:4px;color:#795e26">isinstance</span>
<span class="t m" style="-webkit-text-stroke:0.15px currentColor;left:42.0px;top:64.2px;line-height:4px;color:#0431fa">(</span>
<span class="t m" style="-webkit-text-stroke:0.15px currentColor;left:44.0px;top:64.2px;line-height:4px;color:#001080">InFiles</span>
<span class="t m" style="-webkit-text-stroke:0.15px currentColor;left:58.0px;top:64.2px;line-height:4px;color:#3b3b3b">,</span>
<span class="t m" style="-webkit-text-stroke:0.15px currentColor;left:62.0px;top:64.2px;line-height:4px;color:#267f99">list</span>
<span class="t m" style="-webkit-text-stroke:0.15px currentColor;left:70.0px;top:64.2px;line-height:4px;color:#0431fa">)</span>
<span class="t m" style="-webkit-text-stroke:0.15px currentColor;left:72.0px;top:64.2px;line-height:4px;color:#3b3b3b">:</span>
<span class="t m" style="-webkit-text-stroke:0.15px currentColor;left:16.0px;top:68.2px;line-height:4px;color:#001080">InFiles</span>
<span class="t m" style="-webkit-text-stroke:0.15px currentColor;left:32.0px;top:68.2px;line-height:4px;color:#000000">=</span>
<span class="t m" style="-webkit-text-stroke:0.15px currentColor;left:36.0px;top:68.2px;line-height:4px;color:#0431fa">[</span>
<span class="t m" style="-webkit-text-stroke:0.15px currentColor;left:38.0px;top:68.2px;line-height:4px;color:#001080">args</span>
<span class="t m" style="-webkit-text-stroke:0.15px currentColor;left:46.0px;top:68.2px;line-height:4px;color:#3b3b3b">.</span>
<span class="t m" style="-webkit-text-stroke:0.15px currentColor;left:48.0px;top:68.2px;line-height:4px;color:#3b3b3b">infiles</span>
<span class="t m" style="-webkit-text-stroke:0.15px currentColor;left:62.0px;top:68.2px;line-height:4px;color:#0431fa">]</span>
<span class="t m" style="-webkit-text-stroke:0.15px currentColor;left:8.0px;top:80.2px;line-height:4px;color:#af00db">for</span>
<span class="t m" style="-webkit-text-stroke:0.15px currentColor;left:16.0px;top:80.2px;line-height:4px;color:#001080">filename</span>
<span class="t m" style="-webkit-text-stroke:0.15px currentColor;left:34.0px;top:80.2px;line-height:4px;color:#af00db">in</span>
<span class="t m" style="-webkit-text-stroke:0.15px currentColor;left:40.0px;top:80.2px;line-height:4px;color:#001080">InFiles</span>
<span class="t m" style="-webkit-text-stroke:0.15px currentColor;left:54.0px;top:80.2px;line-height:4px;color:#3b3b3b">:</span>
<span class="t m" style="-webkit-text-stroke:0.15px currentColor;left:16.0px;top:84.2px;line-height:4px;color:#001080">inflammation_data</span>
<span class="t m" style="-webkit-text-stroke:0.15px currentColor;left:52.0px;top:84.2px;line-height:4px;color:#000000">=</span>
<span class="t m" style="-webkit-text-stroke:0.15px currentColor;left:56.0px;top:84.2px;line-height:4px;color:#267f99">models</span>
<span class="t m" style="-webkit-text-stroke:0.15px currentColor;left:68.0px;top:84.2px;line-height:4px;color:#3b3b3b">.</span>
<span class="t m" style="-webkit-text-stroke:0.15px currentColor;left:70.0px;top:84.2px;line-height:4px;color:#795e26">load_csv</span>
<span class="t m" style="-webkit-text-stroke:0.15px currentColor;left:86.0px;top:84.2px;line-height:4px;color:#0431fa">(</span>
<span class="t m" style="-webkit-text-stroke:0.15px currentColor;left:88.0px;top:84.2px;line-height:4px;color:#001080">filename</span>
<span class="t m" style="-webkit-text-stroke:0.15px currentColor;left:104.0px;top:84.2px;line-height:4px;color:#0431fa">)</span>
<span class="t m" style="-webkit-text-stroke:0.15px currentColor;left:16.0px;top:92.2px;line-height:4px;color:#001080">view_data</span>
<span class="t m" style="-webkit-text-stroke:0.15px currentColor;left:36.0px;top:92.2px;line-height:4px;color:#000000">=</span>
<span class="t m" style="-webkit-text-stroke:0.15px currentColor;left:40.0px;top:92.2px;line-height:4px;color:#0431fa">{</span>
<span class="t m" style="-webkit-text-stroke:0.15px currentColor;left:42.0px;top:92.2px;line-height:4px;color:#a31515">&#x27;average&#x27;</span>
<span class="t m" style="-webkit-text-stroke:0.15px currentColor;left:60.0px;top:92.2px;line-height:4px;color:#3b3b3b">:</span>
<span class="t m" style="-webkit-text-stroke:0.15px currentColor;left:64.0px;top:92.2px;line-height:4px;color:#267f99">models</span>
<span class="t m" style="-webkit-text-stroke:0.15px currentColor;left:76.0px;top:92.2px;line-height:4px;color:#3b3b3b">.</span>
<span class="t m" style="-webkit-text-stroke:0.15px currentColor;left:78.0px;top:92.2px;line-height:4px;color:#795e26">daily_mean</span>
<span class="t m" style="-webkit-text-stroke:0.15px currentColor;left:98.0px;top:92.2px;line-height:4px;color:#319331">(</span>
<span class="t m" style="-webkit-text-stroke:0.15px currentColor;left:100.0px;top:92.2px;line-height:4px;color:#001080">inflammation_data</span>
<span class="t m" style="-webkit-text-stroke:0.15px currentColor;left:134.0px;top:92.2px;line-height:4px;color:#319331">)</span>
<span class="t m" style="-webkit-text-stroke:0.15px currentColor;left:136.0px;top:92.2px;line-height:4px;color:#3b3b3b">,</span>
<span class="t m" style="-webkit-text-stroke:0.15px currentColor;left:140.0px;top:92.2px;line-height:4px;color:#a31515">&#x27;max&#x27;</span>
<span class="t m" style="-webkit-text-stroke:0.15px currentColor;left:150.0px;top:92.2px;line-height:4px;color:#3b3b3b">:</span>
<span class="t m" style="-webkit-text-stroke:0.15px currentColor;left:154.0px;top:92.2px;line-height:4px;color:#267f99">models</span>
<span class="t m" style="-webkit-text-stroke:0.15px currentColor;left:166.0px;top:92.2px;line-height:4px;color:#3b3b3b">.</span>
<span class="t m" style="-webkit-text-stroke:0.15px currentColor;left:168.0px;top:92.2px;line-height:4px;color:#795e26">daily_max</span>
<span class="t m" style="-webkit-text-stroke:0.15px currentColor;left:186.0px;top:92.2px;line-height:4px;color:#319331">(</span>
<span class="t m" style="-webkit-text-stroke:0.15px currentColor;left:188.0px;top:92.2px;line-height:4px;color:#001080">inflammation_data</span>
<span class="t m" style="-webkit-text-stroke:0.15px currentColor;left:222.0px;top:92.2px;line-height:4px;color:#319331">)</span>
<span class="t m" style="-webkit-text-stroke:0.15px currentColor;left:16.0px;top:100.2px;line-height:4px;color:#267f99">views</span>
<span class="t m" style="-webkit-text-stroke:0.15px currentColor;left:26.0px;top:100.2px;line-height:4px;color:#3b3b3b">.</span>
<span class="t m" style="-webkit-text-stroke:0.15px currentColor;left:28.0px;top:100.2px;line-height:4px;color:#795e26">visualize</span>
<span class="t m" style="-webkit-text-stroke:0.15px currentColor;left:46.0px;top:100.2px;line-height:4px;color:#0431fa">(</span>
<span class="t m" style="-webkit-text-stroke:0.15px currentColor;left:48.0px;top:100.2px;line-height:4px;color:#001080">view_data</span>
<span class="t m" style="-webkit-text-stroke:0.15px currentColor;left:66.0px;top:100.2px;line-height:4px;color:#0431fa">)</span>
<span class="t m" style="-webkit-text-stroke:0.15px currentColor;left:0.0px;top:108.2px;line-height:4px;color:#af00db">if</span>
<span class="t m" style="-webkit-text-stroke:0.15px currentColor;left:6.0px;top:108.2px;line-height:4px;color:#001080">__name__</span>
<span class="t m" style="-webkit-text-stroke:0.15px currentColor;left:24.0px;top:108.2px;line-height:4px;color:#000000">==</span>
<span class="t m" style="-webkit-text-stroke:0.15px currentColor;left:30.0px;top:108.2px;line-height:4px;color:#a31515">&quot;__main__&quot;</span>
<span class="t m" style="-webkit-text-stroke:0.15px currentColor;left:50.0px;top:108.2px;line-height:4px;color:#3b3b3b">:</span>
<span class="t m" style="-webkit-text-stroke:0.15px currentColor;left:8.0px;top:112.2px;line-height:4px;color:#001080">parser</span>
<span class="t m" style="-webkit-text-stroke:0.15px currentColor;left:22.0px;top:112.2px;line-height:4px;color:#000000">=</span>
<span class="t m" style="-webkit-text-stroke:0.15px currentColor;left:26.0px;top:112.2px;line-height:4px;color:#267f99">argparse</span>
<span class="t m" style="-webkit-text-stroke:0.15px currentColor;left:42.0px;top:112.2px;line-height:4px;color:#3b3b3b">.</span>
<span class="t m" style="-webkit-text-stroke:0.15px currentColor;left:44.0px;top:112.2px;line-height:4px;color:#267f99">ArgumentParser</span>
<span class="t m" style="-webkit-text-stroke:0.15px currentColor;left:72.0px;top:112.2px;line-height:4px;color:#0431fa">(</span>
<span class="t m" style="-webkit-text-stroke:0.15px currentColor;left:16.0px;top:116.2px;line-height:4px;color:#001080">description</span>
<span class="t m" style="-webkit-text-stroke:0.15px currentColor;left:38.0px;top:116.2px;line-height:4px;color:#000000">=</span>
<span class="t m" style="-webkit-text-stroke:0.15px currentColor;left:40.0px;top:116.2px;line-height:4px;color:#a31515">&#x27;A basic patient inflammation data management system&#x27;</span>
<span class="t m" style="-webkit-text-stroke:0.15px currentColor;left:146.0px;top:116.2px;line-height:4px;color:#0431fa">)</span>
<span class="t m" style="-webkit-text-stroke:0.15px currentColor;left:8.0px;top:124.2px;line-height:4px;color:#001080">parser</span>
<span class="t m" style="-webkit-text-stroke:0.15px currentColor;left:20.0px;top:124.2px;line-height:4px;color:#3b3b3b">.</span>
<span class="t m" style="-webkit-text-stroke:0.15px currentColor;left:22.0px;top:124.2px;line-height:4px;color:#795e26">add_argument</span>
<span class="t m" style="-webkit-text-stroke:0.15px currentColor;left:46.0px;top:124.2px;line-height:4px;color:#0431fa">(</span>
<span class="t m" style="-webkit-text-stroke:0.15px currentColor;left:16.0px;top:128.2px;line-height:4px;color:#a31515">&#x27;infiles&#x27;</span>
<span class="t m" style="-webkit-text-stroke:0.15px currentColor;left:34.0px;top:128.2px;line-height:4px;color:#3b3b3b">,</span>
<span class="t m" style="-webkit-text-stroke:0.15px currentColor;left:16.0px;top:132.2px;line-height:4px;color:#001080">nargs</span>
<span class="t m" style="-webkit-text-stroke:0.15px currentColor;left:26.0px;top:132.2px;line-height:4px;color:#000000">=</span>
<span class="t m" style="-webkit-text-stroke:0.15px currentColor;left:28.0px;top:132.2px;line-height:4px;color:#a31515">&#x27;+&#x27;</span>
<span class="t m" style="-webkit-text-stroke:0.15px currentColor;left:34.0px;top:132.2px;line-height:4px;color:#3b3b3b">,</span>
<span class="t m" style="-webkit-text-stroke:0.15px currentColor;left:16.0px;top:136.2px;line-height:4px;color:#001080">help</span>
<span class="t m" style="-webkit-text-stroke:0.15px currentColor;left:24.0px;top:136.2px;line-height:4px;color:#3b3b3b">=</span>
<span class="t m" style="-webkit-text-stroke:0.15px currentColor;left:26.0px;top:136.2px;line-height:4px;color:#a31515">&#x27;Input CSV(s) containing inflammation series for each patient&#x27;</span>
<span class="t m" style="-webkit-text-stroke:0.15px currentColor;left:150.0px;top:136.2px;line-height:4px;color:#0431fa">)</span>
<span class="t m" style="-webkit-text-stroke:0.15px currentColor;left:8.0px;top:144.2px;line-height:4px;color:#001080">args</span>
<span class="t m" style="-webkit-text-stroke:0.15px currentColor;left:18.0px;top:144.2px;line-height:4px;color:#3b3b3b">=</span>
<span class="t m" style="-webkit-text-stroke:0.15px currentColor;left:22.0px;top:144.2px;line-height:4px;color:#001080">parser</span>
<span class="t m" style="-webkit-text-stroke:0.15px currentColor;left:34.0px;top:144.2px;line-height:4px;color:#3b3b3b">.</span>
<span class="t m" style="-webkit-text-stroke:0.15px currentColor;left:36.0px;top:144.2px;line-height:4px;color:#795e26">parse_args</span>
<span class="t m" style="-webkit-text-stroke:0.15px currentColor;left:56.0px;top:144.2px;line-height:4px;color:#0431fa">()</span>
<span class="t m" style="-webkit-text-stroke:0.15px currentColor;left:8.0px;top:152.2px;line-height:4px;color:#795e26">main</span>
<span class="t m" style="-webkit-text-stroke:0.15px currentColor;left:16.0px;top:152.2px;line-height:4px;color:#0431fa">(</span>
<span class="t m" style="-webkit-text-stroke:0.15px currentColor;left:18.0px;top:152.2px;line-height:4px;color:#001080">args</span>
<span class="t m" style="-webkit-text-stroke:0.15px currentColor;left:26.0px;top:152.2px;line-height:4px;color:#0431fa">)</span>
</div>
<div style="left:3473.5px;top:315.2px;width:2px;height:1060.3px;background:#efefef;"></div>
<div style="left:3474px;top:883.2px;width:38px;height:5.6px;background:#424242;"></div>
<div style="left:3471.8px;top:810px;width:1.6px;height:31px;background:#4a9a3f;"></div>
<div style="left:1335.5px;top:1375.5px;width:2176.5px;height:738.0px;background:#f8f8f8;"></div>
<div style="left:1335.5px;top:1374.1px;width:2176.5px;height:2.9px;background:#e5e5e5;"></div>
<span class="t" style="left:1392.04px;top:1410.20px;font-size:32.6px;color:#3b3b3b;transform:scaleX(0.9600);transform-origin:0 0;">PROBLEMS</span>
<span class="t" style="left:1636.24px;top:1410.20px;font-size:32.6px;color:#3b3b3b;transform:scaleX(0.9830);transform-origin:0 0;">OUTPUT</span>
<span class="t" style="left:1836.04px;top:1410.20px;font-size:32.6px;color:#3b3b3b;transform:scaleX(0.9640);transform-origin:0 0;">DEBUG CONSOLE</span>
<span class="t" style="left:2180.04px;top:1410.20px;font-size:32.6px;color:#3b3b3b;transform:scaleX(0.9610);transform-origin:0 0;">TERMINAL</span>
<span class="t" style="left:2407.04px;top:1410.20px;font-size:32.6px;color:#3b3b3b;transform:scaleX(0.9630);transform-origin:0 0;">PORTS</span>
<div style="left:2172.8px;top:1455.6px;width:172.19999999999982px;height:2.9px;background:#285db1;"></div>
<svg style="left:2842.90px;top:1404.90px;" width="44.00" height="44.00" viewBox="2842.90 1404.90 44.00 44.00"><rect x="2846.30" y="1408.50" width="37.200" height="36.800" rx="4" fill="none" stroke="#3b3b3b" stroke-width="3"/><path d="M2854.00 1419.50L2863.20 1428.10L2854.00 1437.40M2865.00 1436.80H2876.10" fill="none" stroke="#3b3b3b" stroke-width="3" /></svg>
<span class="t" style="left:2900.20px;top:1410.33px;font-size:33.4px;color:#86611a;letter-spacing:0.300px;">zsh</span>
<svg style="left:2965.00px;top:1405.10px;" width="43.80" height="40.60" viewBox="2965.00 1405.10 43.80 40.60"><path d="M2986.90 1409.94L3004.37 1442.35H2969.43z" fill="none" stroke="#86611a" stroke-width="2.7" stroke-linejoin="round"/><rect x="2984.79" y="1421.19" width="4.21" height="12.63" fill="#86611a"/><rect x="2984.79" y="1435.47" width="4.21" height="3.10" fill="#86611a"/></svg>
<svg style="left:3035.60px;top:1406.70px;" width="37.40" height="37.40" viewBox="0 0 37.4 37.4"><path d="M18.7 0v37.4M0 18.7h37.4" fill="none" stroke="#3b3b3b" stroke-width="2.9" /></svg>
<svg style="left:3088.60px;top:1421.93px;" width="21.00" height="11.34" viewBox="0 0 21 11.34"><path d="M1 1L10.5 9.74L20 1" fill="none" stroke="#3b3b3b" stroke-width="2.6" /></svg>
<svg style="left:3145.20px;top:1407.00px;" width="37.00" height="37.00" viewBox="0 0 37 37"><rect x="1.500" y="1.500" width="34" height="34" rx="3" fill="none" stroke="#3b3b3b" stroke-width="2.900"/><path d="M18.5 1.500v34" fill="none" stroke="#3b3b3b" stroke-width="2.9" /></svg>
<svg style="left:3210.10px;top:1404.00px;" width="40.00" height="44.00" viewBox="3210.10 1404.00 40.00 44.00"><g transform="translate(0.00 0.00)"><path d="M3214.300 1413.800H3246M3225.200 1413.500V1411a2 2 0 0 1 2-2h6.300a2 2 0 0 1 2 2V1413.500M3218.900 1414V1439.500a3 3 0 0 0 3 3H3238a3 3 0 0 0 3-3V1414M3224.300 1418.200V1437.800M3230.300 1418.200V1437.800M3236.100 1418.200V1437.800" fill="none" stroke="#3b3b3b" stroke-width="3" /></g></svg>
<div style="left:3282.8px;top:1424.0px;width:6.2px;height:6.2px;background:#3b3b3b;border-radius:50%;"></div>
<div style="left:3297.4px;top:1424.0px;width:6.2px;height:6.2px;background:#3b3b3b;border-radius:50%;"></div>
<div style="left:3311.8px;top:1424.0px;width:6.2px;height:6.2px;background:#3b3b3b;border-radius:50%;"></div>
<svg style="left:3358.30px;top:1417.28px;" width="28.60" height="15.44" viewBox="0 0 28.6 15.444000000000003"><path d="M1 14.444000000000003L14.3 1.6L27.6 14.444000000000003" fill="none" stroke="#3b3b3b" stroke-width="2.9" /></svg>
<svg style="left:3435.05px;top:1413.85px;" width="24.50" height="24.50" viewBox="0 0 24.5 24.5"><path d="M1 1L23.5 23.5M23.5 1L1 23.5" fill="none" stroke="#3b3b3b" stroke-width="2.9" /></svg>
<span class="t m" style="left:1394.5px;top:1501.26px;font-size:34.56px;color:#3b3b3b;letter-spacing:-0.805px">mbassan2@Mac python-intermediate-inflammation % </span>
<div style="left:2354.5px;top:1496.7px;width:19.4px;height:40.6px;box-sizing:border-box;border:2.9px solid #285db1;"></div>
<div style="left:3473.5px;top:1496px;width:40px;height:616.0px;background:#fbfbfb;"></div>
<div style="left:3473.5px;top:1496px;width:2px;height:617.5px;background:#ececec;"></div>
<div style="left:3473.5px;top:1495px;width:40px;height:1.5px;background:#efefef;"></div>
<div style="left:3474.5px;top:1606.3px;width:13.3px;height:34.2px;background:#bdbdbd;"></div>
<div style="left:0px;top:2113.5px;width:3512px;height:61.5px;background:#f8f8f8;border-radius:0 0 16px 16px;"></div>
<div style="left:0px;top:2112.1px;width:3512px;height:2.9px;background:#e5e5e5;"></div>
<div style="left:0px;top:2115.0px;width:98px;height:60.0px;background:#275eb3;border-radius:0 0 0 16px;"></div>
<svg style="left:30.00px;top:2120.00px;" width="40.00" height="46.00" viewBox="30.00 2120.00 40.00 46.00"><path d="M36.500 2138L48.300 2148.300L36.500 2158.800M60.300 2127L49.500 2137.600L60.300 2148.300" fill="none" stroke="#fff" stroke-width="2.8" /></svg>
<svg style="left:122.00px;top:2120.00px;" width="38.00" height="48.00" viewBox="122.00 2120.00 38.00 48.00"><circle cx="132.400" cy="2130.500" r="4.700" fill="none" stroke="#3b3b3b" stroke-width="2.700"/><circle cx="132.400" cy="2158.200" r="4.700" fill="none" stroke="#3b3b3b" stroke-width="2.700"/><circle cx="150.600" cy="2138.200" r="4.700" fill="none" stroke="#3b3b3b" stroke-width="2.700"/><path d="M132.400 2135.200V2153.500M150.600 2142.900C150.600 2148.500 146 2150 141.500 2150C136 2150 132.400 2150.500 132.400 2153.500" fill="none" stroke="#3b3b3b" stroke-width="2.7" /></svg>
<span class="t" style="left:170.48px;top:2126.23px;font-size:35.4px;color:#3b3b3b;letter-spacing:0.550px;">main*</span>
<svg style="left:280.00px;top:2122.00px;" width="46.00" height="44.00" viewBox="280.00 2122.00 46.00 44.00"><path d="M288.14 2141.81A14.3 14.3 0 0 1 316.46 2141.81M309.96 2137.31L316.86 2144.61L321.66 2136.01M316.29 2146.77A14.3 14.3 0 0 1 288.31 2146.77M294.81 2151.27L287.91 2143.97L283.11 2152.57" fill="none" stroke="#3b3b3b" stroke-width="2.7" /></svg>
<svg style="left:368.50px;top:2124.00px;" width="40.00" height="40.00" viewBox="0 0 16 16"><circle cx="8" cy="8" r="6.500" fill="none" stroke="#3b3b3b" stroke-width="1"/><path d="M5.500 5.500l5 5 M10.500 5.500l-5 5" fill="none" stroke="#3b3b3b" stroke-width="1" /></svg>
<span class="t" style="left:418.68px;top:2126.23px;font-size:35.4px;color:#3b3b3b;">0</span>
<svg style="left:450.90px;top:2123.90px;" width="38.60" height="36.60" viewBox="450.90 2123.90 38.60 36.60"><path d="M470.20 2128.52L485.25 2157.25H455.15z" fill="none" stroke="#3b3b3b" stroke-width="2.5" stroke-linejoin="round"/><rect x="468.25" y="2138.45" width="3.90" height="11.25" fill="#3b3b3b"/><rect x="468.25" y="2151.16" width="3.90" height="2.88" fill="#3b3b3b"/></svg>
<span class="t" style="left:499.88px;top:2126.23px;font-size:35.4px;color:#3b3b3b;">0</span>
<svg style="left:1378.00px;top:2120.00px;" width="26.00" height="48.00" viewBox="1378.00 2120.00 26.00 48.00"><circle cx="1390.700" cy="2143.700" r="8.550" fill="none" stroke="#3b3b3b" stroke-width="3.100"/><path d="M1390.700 2123.700V2135.500M1390.700 2152V2163.700" fill="none" stroke="#3b3b3b" stroke-width="2.8" /></svg>
<span class="t" style="left:1421.88px;top:2126.23px;font-size:35.4px;color:#3b3b3b;letter-spacing:0.284px;">James Graham (5 years ago)</span>
<div style="left:1912px;top:2115.0px;width:98px;height:60.0px;background:#c3c4c9;"></div>
<svg style="left:1941.00px;top:2124.30px;" width="40.00" height="40.00" viewBox="0 0 16 16"><circle cx="6.500" cy="6.500" r="5" fill="none" stroke="#3b3b3b" stroke-width="1"/><path d="M10.200 10.200l4.800 4.800 M6.500 4v5 M4 6.500h5" fill="none" stroke="#3b3b3b" stroke-width="1" /></svg>
<span class="t" style="left:2031.08px;top:2126.23px;font-size:35.4px;color:#3b3b3b;letter-spacing:1.000px;">Ln 33, Col 19</span>
<span class="t" style="left:2298.88px;top:2126.23px;font-size:35.4px;color:#3b3b3b;letter-spacing:0.275px;">Spaces: 4</span>
<span class="t" style="left:2505.88px;top:2126.23px;font-size:35.4px;color:#3b3b3b;letter-spacing:1.525px;">UTF-8</span>
<span class="t" style="left:2656.28px;top:2126.23px;font-size:35.4px;color:#3b3b3b;letter-spacing:-0.300px;">LF</span>
<span class="t" style="left:2747.42px;top:2127.27px;font-size:33px;color:#3b3b3b;letter-spacing:0.350px;">{ }</span>
<span class="t" style="left:2799.48px;top:2126.23px;font-size:35.4px;color:#3b3b3b;letter-spacing:1.260px;">Python</span>
<svg style="left:2961.00px;top:2126.00px;" width="41.00" height="36.50" viewBox="0 0 47 40"><path d="M0 26.5C0 20 5 16.500 8 16.500L39 16.500C42 16.500 47 20 47 26.500C47 33.500 35 40 23.500 40C12 40 0 33.500 0 26.500z" fill="#3b3b3b" /><path d="M8.600 15L38.200 15L38.200 32C33 34.800 28 36.300 23.500 36.300C19 36.300 14 34.800 8.600 32z" fill="#f8f8f8" /><rect x="7" y="2" width="15.400" height="16.300" rx="6.500" fill="#f8f8f8" stroke="#3b3b3b" stroke-width="4"/><rect x="24.600" y="2" width="15.400" height="16.300" rx="6.500" fill="#f8f8f8" stroke="#3b3b3b" stroke-width="4"/><rect x="16.100" y="23.800" width="4.600" height="8.400" rx="2.300" fill="#3b3b3b"/><rect x="26.100" y="23.800" width="4.600" height="8.400" rx="2.300" fill="#3b3b3b"/></svg>
<span class="t" style="left:3048.88px;top:2126.23px;font-size:35.4px;color:#3b3b3b;letter-spacing:1.140px;">3.11.7 (&#x27;venv&#x27;: venv)</span>
<svg style="left:3430.00px;top:2120.00px;" width="40.00" height="46.00" viewBox="3430.00 2120.00 40.00 46.00"><path d="M3436.600 2154.800C3438.200 2151 3438.700 2148 3438.700 2144V2138.500A11.400 11.400 0 0 1 3461.500 2138.500V2144C3461.500 2148 3462 2151 3463.600 2154.800Z" fill="none" stroke="#3b3b3b" stroke-width="2.6" stroke-linejoin="round"/><path d="M3446.300 2155.500A3.800 4.400 0 0 0 3453.900 2155.500" fill="none" stroke="#3b3b3b" stroke-width="2.6" /></svg>
</div>
</body></html>
